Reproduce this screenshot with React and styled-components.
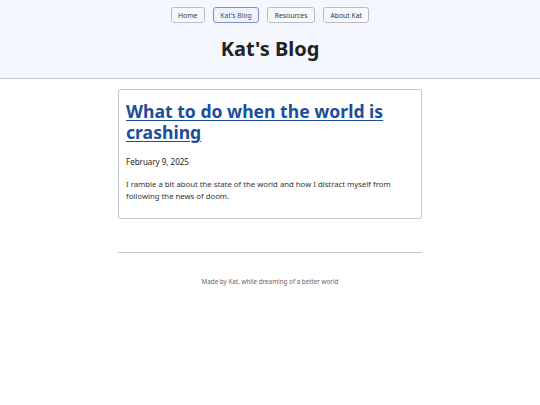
import React from 'react';
import styled, { createGlobalStyle } from 'styled-components';

const GlobalStyle = createGlobalStyle`
    html, body {
        margin: 0;
        padding: 0;
        background: #fff;
        font-family: "Noto Sans", "Open Sans", sans-serif;
        color: #222;
    }
`;

const links = ['Home', "Kat's Blog", 'Resources', 'About Kat'];

export default function App() {
    return (
        <>
            <GlobalStyle />
            <Header>
                <Nav>
                    {links.map(link => (
                        <NavButton key={link} $active={link === "Kat's Blog"}>{link}</NavButton>
                    ))}
                </Nav>
                <SiteTitle>Kat's Blog</SiteTitle>
            </Header>
            <Main>
                <Card>
                    <PostTitle href="#">What to do when the world is crashing</PostTitle>
                    <PostDate>February 9, 2025</PostDate>
                    <Summary>
                        I ramble a bit about the state of the world and how I distract myself from following the news of doom.
                    </Summary>
                </Card>
                <Rule />
                <Footer>Made by Kat, while dreaming of a better world</Footer>
            </Main>
        </>
    );
}

const Header = styled.header`
    background: #f5f7fe;
    border-bottom: 1px solid #c5c9d4;
    padding: 7px 0 16px;
    display: flex;
    flex-direction: column;
    align-items: center;
`;

const Nav = styled.nav`
    display: flex;
    gap: 8px;
`;

const NavButton = styled.button`
    font-family: inherit;
    font-size: 6.8px;
    height: 16px;
    padding: 0 6.5px;
    border-radius: 3px;
    background: ${p => (p.$active ? '#eef2fc' : '#f8f9fc')};
    border: 1px solid ${p => (p.$active ? '#7d93c4' : '#b9bdc8')};
    color: ${p => (p.$active ? '#2f4f97' : '#333')};
`;

const SiteTitle = styled.h1`
    margin: 12px 0 0;
    font-size: 20px;
    line-height: 27px;
    font-weight: 700;
    color: #222;
`;

const Main = styled.main`
    width: 304px;
    margin: 0 auto;
    padding-top: 10px;
`;

const Card = styled.article`
    border: 1px solid #c8c8cc;
    border-radius: 2px;
    padding: 7px 7px 16px;
`;

const PostTitle = styled.a`
    display: block;
    font-size: 17.6px;
    line-height: 21px;
    font-weight: 700;
    color: #1d4e9a;
    text-decoration: underline;
    text-decoration-thickness: 1px;
    text-underline-offset: 2px;
    margin-top: 4px;
`;

const PostDate = styled.p`
    margin: 13px 0 0;
    font-size: 8px;
    line-height: 11px;
    color: #222;
`;

const Summary = styled.p`
    margin: 11px 0 0;
    font-size: 7.75px;
    line-height: 12px;
    color: #333;
`;

const Rule = styled.hr`
    border: none;
    border-top: 1px solid #c8c8c8;
    margin: 33px 0 0;
`;

const Footer = styled.footer`
    text-align: center;
    font-size: 6.3px;
    color: #666;
    margin-top: 24px;
`;
